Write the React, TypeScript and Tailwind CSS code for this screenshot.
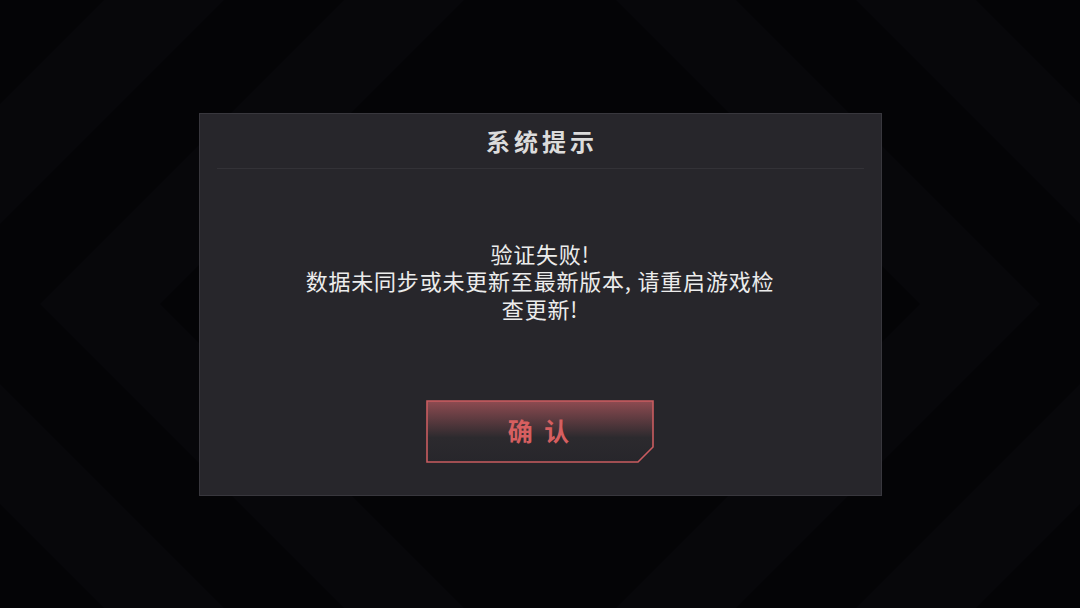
import React from "react";

const cjk = { fontFamily: '"Noto Sans CJK SC", "Noto Sans", sans-serif' };

// faint concentric diamonds behind the dialog
function Backdrop() {
  const sizes = [980, 860, 740, 620, 500, 380];
  return (
    <svg
      className="absolute inset-0"
      width="1080"
      height="608"
      viewBox="0 0 1080 608"
    >
      <rect width="1080" height="608" fill="#040406" />
      {sizes.map((s, i) => (
        <polygon
          key={s}
          points={`540,${304 - s} ${540 + s},304 540,${304 + s} ${540 - s},304`}
          fill={i % 2 === 0 ? "#07070a" : "#040406"}
        />
      ))}
    </svg>
  );
}

function ConfirmButton() {
  return (
    <button className="relative w-[228px] h-[63px] flex items-center justify-center">
      <svg
        className="absolute inset-0"
        width="228"
        height="63"
        viewBox="0 0 228 63"
      >
        <defs>
          <linearGradient id="btnFill" x1="0" y1="0" x2="0" y2="1">
            <stop offset="0" stopColor="#8e4b51" />
            <stop offset="0.6" stopColor="#2c2a2e" />
            <stop offset="1" stopColor="#27262b" />
          </linearGradient>
        </defs>
        <polygon
          points="1,1 227,1 227,47 212,62 1,62"
          fill="url(#btnFill)"
          stroke="#c95c60"
          strokeWidth="1.6"
        />
      </svg>
      <span
        className="relative text-[25px] font-bold text-[#d65f60] tracking-[3px]"
        style={cjk}
      >
        确 认
      </span>
    </button>
  );
}

export default function App() {
  return (
    <div className="relative w-[1080px] h-[608px] overflow-hidden flex items-center justify-center bg-[#040406]">
      <Backdrop />
      <div className="relative w-[683px] h-[383px] bg-[#27262b] border border-[#38373d] flex flex-col">
        <div className="h-[54px] flex items-center justify-center">
          <h1
            className="text-[24px] font-bold text-[#dcdcdc] tracking-[4px] leading-none pl-[4px]"
            style={cjk}
          >
            系统提示
          </h1>
        </div>
        <div className="mx-[17px] h-px bg-[#333237]" />
        <div className="h-[231px] flex items-start justify-center pt-[71px]">
          <p
            className="text-[22px] leading-[27.5px] text-[#ececec] text-center tracking-[0.8px]"
            style={cjk}
          >
            验证失败!
            <br />
            数据未同步或未更新至最新版本, 请重启游戏检
            <br />
            查更新!
          </p>
        </div>
        <div className="flex justify-center">
          <ConfirmButton />
        </div>
      </div>
    </div>
  );
}
